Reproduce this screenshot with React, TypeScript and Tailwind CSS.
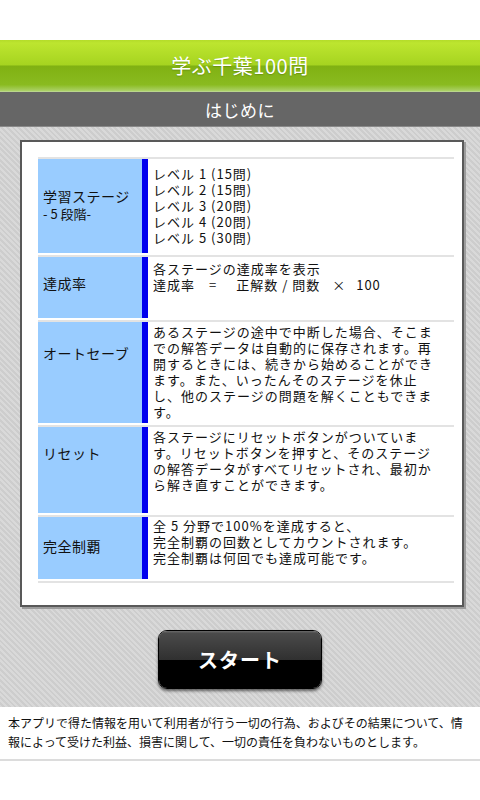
import React from "react";

const font = "font-['Noto_Sans_CJK_JP','Noto_Sans',sans-serif]";

type Row = {
  h: string;
  labelPt: string;
  textPt: string;
  label: React.ReactNode;
  text: React.ReactNode;
};

const Lines = ({ lines }: { lines: string[] }) => (
  <>
    {lines.map((l, i) => (
      <div key={i} className="whitespace-nowrap">
        {l}
      </div>
    ))}
  </>
);

const rows: Row[] = [
  {
    h: "h-[94px]",
    labelPt: "pt-[28px]",
    textPt: "pt-[7px]",
    label: (
      <>
        <div className="leading-[18px]">学習ステージ</div>
        <div className="leading-[18px] text-[13px] tracking-[0px]">- 5 段階-</div>
      </>
    ),
    text: (
      <Lines
        lines={[
          "レベル 1 (15問)",
          "レベル 2 (15問)",
          "レベル 3 (20問)",
          "レベル 4 (20問)",
          "レベル 5 (30問)",
        ]}
      />
    ),
  },
  {
    h: "h-[61px]",
    labelPt: "pt-[17px]",
    textPt: "pt-[4px]",
    label: <div className="leading-[18px]">達成率</div>,
    text: (
      <>
        <div className="whitespace-nowrap">各ステージの達成率を表示</div>
        <div className="whitespace-nowrap flex">
          <span>達成率</span>
          <span className="ml-[14px]">=</span>
          <span className="ml-[19px]">正解数 / 問数</span>
          <span className="ml-[12px]">×</span>
          <span className="ml-[10px]">100</span>
        </div>
      </>
    ),
  },
  {
    h: "h-[101px]",
    labelPt: "pt-[22px]",
    textPt: "pt-[2px]",
    label: <div className="leading-[18px]">オートセーブ</div>,
    text: (
      <Lines
        lines={[
          "あるステージの途中で中断した場合、そこま",
          "での解答データは自動的に保存されます。再",
          "開するときには、続きから始めることができ",
          "ます。また、いったんそのステージを休止",
          "し、他のステージの問題を解くこともできま",
          "す。",
        ]}
      />
    ),
  },
  {
    h: "h-[86px]",
    labelPt: "pt-[17px]",
    textPt: "pt-[2px]",
    label: <div className="leading-[18px]">リセット</div>,
    text: (
      <Lines
        lines={[
          "各ステージにリセットボタンがついていま",
          "す。リセットボタンを押すと、そのステージ",
          "の解答データがすべてリセットされ、最初か",
          "ら解き直すことができます。",
        ]}
      />
    ),
  },
  {
    h: "h-[62px]",
    labelPt: "pt-[20px]",
    textPt: "pt-[1px]",
    label: <div className="leading-[18px]">完全制覇</div>,
    text: (
      <Lines
        lines={[
          "全 5 分野で100%を達成すると、",
          "完全制覇の回数としてカウントされます。",
          "完全制覇は何回でも達成可能です。",
        ]}
      />
    ),
  },
];

export default function App() {
  return (
    <div className={`w-[480px] h-[800px] bg-white overflow-hidden ${font} text-[#111]`}>
      <div className="h-[40px] bg-white" />
      <div className="h-[52px] flex items-center justify-center bg-[linear-gradient(to_bottom,#b4dc2a_0%,#bde52f_6%,#a6d420_48%,#80b112_50%,#8abb20_86%,#a9cf62_97%,#c2d9a0_100%)]">
        <span className="text-white text-[20px] tracking-[0.5px] leading-none [text-shadow:0_1px_1px_rgba(60,90,0,0.35)]">
          学ぶ千葉100問
        </span>
      </div>
      <div className="h-[35px] flex items-center justify-center bg-[#666666] border-b border-[#8a8a8a]">
        <span className="text-white text-[17px] leading-none tracking-[0.5px]">はじめに</span>
      </div>
      <div className="pt-[13px] pb-[18px] bg-[image:repeating-linear-gradient(45deg,#d9d9d9_0px,#d9d9d9_2px,#cdcdcd_2px,#cdcdcd_4px)]">
        <div className="ml-[20px] mr-[16px] bg-white border-2 border-[#595959] shadow-[2px_2px_0_#9c9c9c] pt-[15px] pl-[16px] pr-[8px] pb-[22px]">
          <div className="border-t-2 border-[#e3e3e3]">
            {rows.map((r, i) => (
              <div key={i} className="pb-[2px] border-b-2 border-[#e3e3e3]">
                <div className={`flex ${r.h}`}>
                  <div
                    className={`w-[104px] shrink-0 bg-[#99ccff] pl-[5px] ${r.labelPt} text-[14px] tracking-[0.5px]`}
                  >
                    {r.label}
                  </div>
                  <div className="w-[6px] shrink-0 bg-[#0000ee]" />
                  <div
                    className={`flex-1 pl-[5px] ${r.textPt} text-[13px] leading-[16px] tracking-[1px]`}
                  >
                    {r.text}
                  </div>
                </div>
              </div>
            ))}
          </div>
        </div>
        <div className="flex justify-center mt-[23px]">
          <div className="w-[164px] h-[59px] rounded-[9px] border border-black overflow-hidden shadow-[0_2px_3px_rgba(0,0,0,0.55)] flex flex-col relative">
            <div className="h-1/2 bg-[linear-gradient(to_bottom,#6a6a6a_0%,#4a4a4a_8%,#303030_100%)]" />
            <div className="h-1/2 bg-black" />
            <div className="absolute inset-0 flex items-center justify-center">
              <span className="text-white text-[20px] font-semibold tracking-[1px] leading-none">スタート</span>
            </div>
          </div>
        </div>
      </div>
      <div className="h-[54px] bg-white border-b-2 border-[#dcdcdc] pl-[8px] pt-[6px] text-[12px] leading-[19px]">
        <div className="whitespace-nowrap">本アプリで得た情報を用いて利用者が行う一切の行為、およびその結果について、情</div>
        <div className="whitespace-nowrap">報によって受けた利益、損害に関して、一切の責任を負わないものとします。</div>
      </div>
    </div>
  );
}
